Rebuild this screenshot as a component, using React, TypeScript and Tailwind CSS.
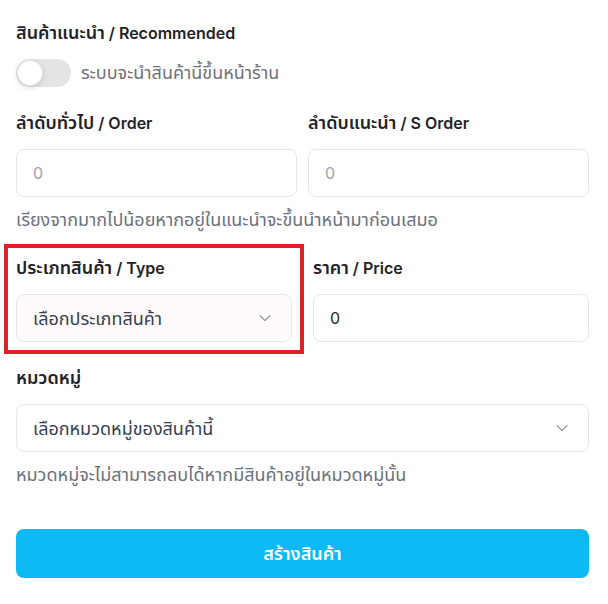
import { ChevronDown } from 'lucide-react'

const FONT = { fontFamily: 'Inter, "Noto Sans", "Noto Sans Thai", sans-serif' }

function Label({ th, en }: { th: string; en?: string }) {
  return (
    <label className="block mb-3.5 text-base leading-6 font-semibold text-[#1f2329]">
      <span className="text-[18px]">{th}</span>
      {en && <span> / {en}</span>}
    </label>
  )
}

function Helper({ children }: { children: React.ReactNode }) {
  return <p className="mt-[11px] text-[18px] leading-6 text-[#6b7280]">{children}</p>
}

export default function App() {
  return (
    <div className="min-h-screen bg-white pl-4 pr-[19px] pt-[21px] pb-6" style={FONT}>
      <div className="flex flex-col gap-6">
        {/* Recommended toggle */}
        <div>
          <Label th="สินค้าแนะนำ" en="Recommended" />
          <div className="flex items-center gap-2.5">
            <button
              type="button"
              className="relative w-[55px] h-7 rounded-full bg-[#e4e4e7] shrink-0"
              aria-pressed="false"
            >
              <span className="absolute left-[1px] top-[1px] w-[26px] h-[26px] rounded-full bg-white border border-[#e5e7eb] shadow-[0_2px_6px_rgba(0,0,0,0.12)]" />
            </button>
            <span className="text-[18px] leading-6 text-[#71717a]">ระบบจะนำสินค้านี้ขึ้นหน้าร้าน</span>
          </div>
        </div>

        {/* Order / S Order */}
        <div>
          <div className="grid grid-cols-2 gap-[11px]">
            <div>
              <Label th="ลำดับทั่วไป" en="Order" />
              <input
                placeholder="0"
                className="w-full h-12 rounded-lg border border-[#e5e7eb] px-4 text-base text-[#374151] placeholder:text-[#a1a1aa] outline-none"
              />
            </div>
            <div>
              <Label th="ลำดับแนะนำ" en="S Order" />
              <input
                placeholder="0"
                className="w-full h-12 rounded-lg border border-[#e5e7eb] px-4 text-base text-[#374151] placeholder:text-[#a1a1aa] outline-none"
              />
            </div>
          </div>
          <Helper>เรียงจากมากไปน้อยหากอยู่ในแนะนำจะขึ้นนำหน้ามาก่อนเสมอ</Helper>
        </div>

        {/* Type / Price */}
        <div className="grid grid-cols-2 gap-[21px]">
          <div className="relative">
            <div className="absolute -inset-3 border-4 border-[#e3202a] pointer-events-none" />
            <Label th="ประเภทสินค้า" en="Type" />
            <div className="flex items-center justify-between h-12 rounded-lg border border-[#e5e7eb] bg-[#fffbfc] pl-4 pr-4 text-[18px] text-[#374151]">
              <span>เลือกประเภทสินค้า</span>
              <ChevronDown className="w-5 h-5 text-[#6b7280]" strokeWidth={1.25} />
            </div>
          </div>
          <div>
            <Label th="ราคา" en="Price" />
            <input
              defaultValue="0"
              className="w-full h-12 rounded-lg border border-[#e5e7eb] px-4 text-base text-[#27272a] outline-none"
            />
          </div>
        </div>

        {/* Category */}
        <div>
          <Label th="หมวดหมู่" />
          <div className="flex items-center justify-between h-12 rounded-lg border border-[#e5e7eb] bg-white pl-4 pr-4 text-[18px] text-[#374151]">
            <span>เลือกหมวดหมู่ของสินค้านี้</span>
            <ChevronDown className="w-5 h-5 text-[#6b7280]" strokeWidth={1.25} />
          </div>
          <Helper>หมวดหมู่จะไม่สามารถลบได้หากมีสินค้าอยู่ในหมวดหมู่นั้น</Helper>
        </div>

        <button
          type="button"
          className="mt-[18px] h-[49px] w-full rounded-lg bg-[#0dbaf4] text-[18px] font-semibold text-white"
        >
          สร้างสินค้า
        </button>
      </div>
    </div>
  )
}
